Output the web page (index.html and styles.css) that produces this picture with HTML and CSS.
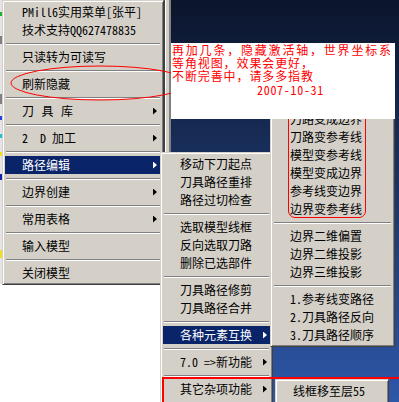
FILE: index.html
```html
<!DOCTYPE html>
<html>
<head>
<meta charset="utf-8">
<link rel="stylesheet" href="styles.css">
</head>
<body>
<div class="screen">
  <div class="bg-left">
    <div class="strip">
      <i class="bit c1"></i><i class="bit c2"></i><i class="bit c3"></i><i class="bit c4"></i>
      <i class="bit c5"></i><i class="bit c6"></i><i class="bit c7"></i><i class="bit c8"></i>
    </div>
  </div>
  <div class="frame"></div>
  <div class="desk"></div>

  <div class="menu m1">
    <div class="it">PMill6实用菜单[张平]</div>
    <div class="it">技术支持QQ627478835</div>
    <div class="sep"></div>
    <div class="it">只读转为可读写</div>
    <div class="sep"></div>
    <div class="it">刷新隐藏</div>
    <div class="sep"></div>
    <div class="it"><span class="wide">刀具库</span><i class="ar"></i></div>
    <div class="sep"></div>
    <div class="it"><span>2  D 加工</span><i class="ar"></i></div>
    <div class="sep"></div>
    <div class="it on"><span>路径编辑</span><i class="ar"></i></div>
    <div class="sep"></div>
    <div class="it"><span>边界创建</span><i class="ar"></i></div>
    <div class="sep"></div>
    <div class="it"><span>常用表格</span><i class="ar"></i></div>
    <div class="sep"></div>
    <div class="it">输入模型</div>
    <div class="sep"></div>
    <div class="it">关闭模型</div>
  </div>

  <div class="menu m2">
    <div class="it">移动下刀起点</div>
    <div class="it">刀具路径重排</div>
    <div class="it">路径过切检查</div>
    <div class="sep"></div>
    <div class="it">选取模型线框</div>
    <div class="it">反向选取刀路</div>
    <div class="it">删除已选部件</div>
    <div class="sep"></div>
    <div class="it">刀具路径修剪</div>
    <div class="it">刀具路径合并</div>
    <div class="sep"></div>
    <div class="it on"><span>各种元素互换</span><i class="ar"></i></div>
    <div class="sep"></div>
    <div class="it"><span>7.0 =&gt;新功能</span><i class="ar"></i></div>
    <div class="sep"></div>
    <div class="it"><span>其它杂项功能</span><i class="ar"></i></div>
  </div>

  <div class="menu m3">
    <div class="it">刀路变成边界</div>
    <div class="it">刀路变参考线</div>
    <div class="it">模型变参考线</div>
    <div class="it">模型变成边界</div>
    <div class="it">参考线变边界</div>
    <div class="it">边界变参考线</div>
    <div class="sep"></div>
    <div class="it">边界二维偏置</div>
    <div class="it">边界二维投影</div>
    <div class="it">边界三维投影</div>
    <div class="sep"></div>
    <div class="it">1.参考线变路径</div>
    <div class="it">2.刀具路径反向</div>
    <div class="it">3.刀具路径顺序</div>
    <div class="mark"></div>
  </div>

  <div class="menu m4">
    <div class="it">线框移至层55</div>
  </div>

  <svg class="ellipse" width="200" height="110" viewBox="0 0 200 110">
    <ellipse cx="100" cy="83" rx="89" ry="17" fill="none" stroke="#ff0000" stroke-width="1"/>
  </svg>

  <div class="note">
    <div class="ln first">再加几条，隐藏激活轴，世界坐标系</div>
    <div class="ln">等角视图，效果会更好，</div>
    <div class="ln">不断完善中，请多多指教</div>
    <div class="ln date">2007-10-31</div>
  </div>

  <div class="redbox"></div>
</div>
</body>
</html>
```

FILE: styles.css
```css
* { box-sizing: border-box; margin: 0; padding: 0; }
html, body { width: 399px; height: 402px; overflow: hidden; }
body {
  margin: 0;
  font-family: "Noto Sans CJK SC", "Noto Sans", sans-serif;
  font-size: 12px;
  font-feature-settings: "hwid" 1;
  color: #000;
  background: #fff;
}
.screen {
  position: relative;
  width: 399px;
  height: 402px;
  display: flex;
  overflow: hidden;
}
.bg-left {
  width: 164px;
  background: #fff;
  display: flex;
}
.strip {
  width: 3px;
  height: 284px;
  background: #e4e4e4;
  display: flex;
  flex-direction: column;
}
.bit { display: block; width: 3px; height: 4px; }
.c1 { background: #1fb02a; margin-top: 12px; }
.c2 { background: #808080; margin-top: 20px; height: 8px; }
.c3 { background: #808080; margin-top: 50px; height: 10px; }
.c4 { background: #2040e0; margin-top: 12px; }
.c5 { background: #20c0d0; margin-top: 14px; }
.c6 { background: #f0e020; margin-top: 14px; }
.c7 { background: #1020b0; margin-top: 18px; height: 6px; }
.c8 { background: #f0e020; margin-top: 70px; height: 8px; }

.frame {
  width: 7px;
  background: #d4d0c8;
  border-left: 1px solid #404040;
  box-shadow: inset 1px 0 #ffffff;
  border-right: 2px solid #808080;
}
.desk {
  flex: 1;
  background: linear-gradient(#0b152b, #2e57a8);
}

.menu {
  position: absolute;
  background: #d4d0c8;
  border: 1px solid;
  border-color: #d4d0c8 #404040 #404040 #d4d0c8;
  box-shadow: inset 1px 1px 0 #ffffff, inset -1px -1px 0 #808080;
  padding: 2px;
}
.m1 { left: 2px; top: 0; width: 162px; z-index: 1; }
.m2 { left: 160px; top: 152px; width: 113px; height: 262px; z-index: 2; }
.m3 { left: 270px; top: 107px; width: 125px; z-index: 3; }
.m4 { left: 275px; top: 379px; width: 114px; height: 40px; z-index: 4; }

.it {
  height: 18px;
  display: flex;
  align-items: center;
  padding: 0 4px 0 17px;
  white-space: pre;
  line-height: 18px;
}
.m2 .it { padding-right: 3px; }
.m4 .it { padding-left: 15px; }
.it.on { background: #0a246a; color: #fff; }
.wide { letter-spacing: 7.5px; }
.ar {
  display: block;
  margin-left: auto;
  width: 4px;
  height: 7px;
  background: currentColor;
  clip-path: polygon(0 0, 100% 50%, 0 100%);
}
.sep { height: 9px; position: relative; }
.sep::before, .sep::after {
  content: "";
  position: absolute;
  left: 1px;
  right: 1px;
  height: 1px;
}
.sep::before { top: 4px; background: #808080; }
.sep::after { top: 5px; background: #ffffff; }

.mark {
  position: absolute;
  left: 17px;
  top: 2px;
  width: 78px;
  height: 108px;
  border: 1px solid #ff0000;
  border-radius: 7px;
}

.ellipse {
  position: absolute;
  left: 0;
  top: 0;
  z-index: 5;
}

.note {
  position: absolute;
  left: 171px;
  top: 43px;
  width: 224px;
  height: 76px;
  background: #ffffff;
  color: #ff0000;
  z-index: 6;
  padding-left: 1px;
  line-height: 13px;
  letter-spacing: 0.9px;
  font-feature-settings: normal;
}
.ln { white-space: nowrap; height: 13px; }
.ln.first { letter-spacing: 1.8px; }
.date {
  padding-left: 85px;
  letter-spacing: 0.7px;
  height: 14px;
  line-height: 14px;
  margin-top: 1px;
  font-feature-settings: "hwid" 1;
}

.redbox {
  position: absolute;
  left: 162px;
  top: 377px;
  width: 250px;
  height: 40px;
  border: 2px solid #ff0000;
  z-index: 7;
}
```
